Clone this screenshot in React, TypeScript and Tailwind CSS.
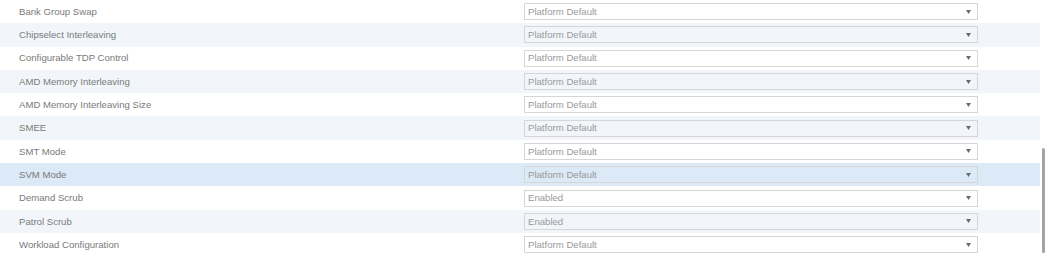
import React from 'react';

type Row = { label: string; value: string };

const rows: Row[] = [
    { label: 'Bank Group Swap', value: 'Platform Default' },
    { label: 'Chipselect Interleaving', value: 'Platform Default' },
    { label: 'Configurable TDP Control', value: 'Platform Default' },
    { label: 'AMD Memory Interleaving', value: 'Platform Default' },
    { label: 'AMD Memory Interleaving Size', value: 'Platform Default' },
    { label: 'SMEE', value: 'Platform Default' },
    { label: 'SMT Mode', value: 'Platform Default' },
    { label: 'SVM Mode', value: 'Platform Default' },
    { label: 'Demand Scrub', value: 'Enabled' },
    { label: 'Patrol Scrub', value: 'Enabled' },
    { label: 'Workload Configuration', value: 'Platform Default' },
];

const HOVER_ROW = 7;

const App: React.FC = () => {
    return (
        <div className="relative w-[1051px] h-[258px] bg-white overflow-hidden font-['Liberation_Sans',Arial,sans-serif]">
            <div className="w-[1040px] flex flex-col">
                {rows.map((row, i) => {
                    const rowBg =
                        i === HOVER_ROW ? 'bg-[#dce9f6]' : i % 2 === 1 ? 'bg-[#f2f6fb]' : 'bg-white';
                    return (
                        <div key={row.label} className={`flex items-center h-[23.3px] ${rowBg}`}>
                            <div className="w-[524px] pl-[19px] text-[9.6px] text-[#7a7a7a] leading-none">
                                {row.label}
                            </div>
                            {/* Select box */}
                            <div className="w-[454px] h-[17px] flex items-center justify-between border border-[#d6d6d6] pl-[3px] pr-[5px]">
                                <span className="text-[9.6px] text-[#999999] leading-none">{row.value}</span>
                                <svg width="5" height="4" viewBox="0 0 5 4" className="mr-[1px]">
                                    <path d="M0 0 H5 L2.5 4 Z" fill="#6a6a6a" />
                                </svg>
                            </div>
                        </div>
                    );
                })}
            </div>

            {/* Scrollbar thumb */}
            <div className="absolute left-[1042px] top-[148px] w-[3px] h-[105px] rounded-full bg-[#a3a3a3]" />
        </div>
    );
};

export default App;
